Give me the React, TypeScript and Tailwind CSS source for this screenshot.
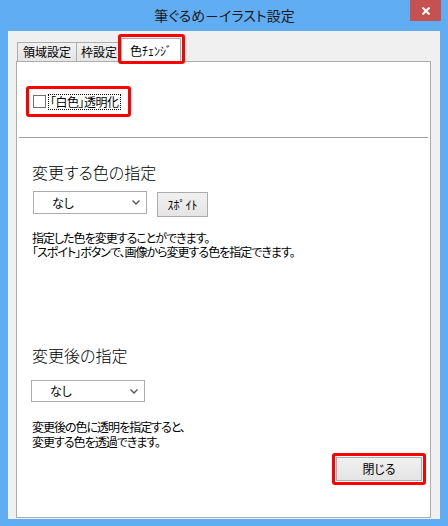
import React from "react";

const font = "font-['Noto_Sans_CJK_JP','Noto_Sans',sans-serif] [font-feature-settings:'palt']";

const Chevron = () => (
  <svg width="8" height="5" viewBox="0 0 8 5" className="ml-auto mr-[6px]">
    <path d="M0.5 0.5 L4 4 L7.5 0.5" fill="none" stroke="#555" strokeWidth="1.4" />
  </svg>
);

const FakeSelect = ({ className }: { className?: string }) => (
  <div
    className={`flex w-[114px] items-center border border-[#acacac] bg-white text-[12px] leading-none ${className ?? ""}`}
  >
    <span className="pl-[18px]">なし</span>
    <Chevron />
  </div>
);

const Tab = ({ label, className }: { label: string; className?: string }) => (
  <div
    className={`flex h-[19px] items-center justify-center border-t border-[#acacac] bg-linear-to-b from-[#f0f0f0] to-[#e5e5e5] text-[12px] leading-none ${className ?? ""}`}
  >
    {label}
  </div>
);

export default function App() {
  return (
    <div className={`flex h-[526px] w-[448px] flex-col bg-[#61adf4] px-[8px] pb-[7px] text-black ${font}`}>
      {/* title bar */}
      <div className="flex h-[31px] shrink-0 items-start">
        <div className="w-[31px]" />
        <div className="flex h-[31px] flex-1 items-center justify-center text-[14px] text-[#1a1a1a]">
          筆ぐるめ－イラスト設定
        </div>
        <div className="-mr-[1px] flex h-[21px] w-[31px] items-center justify-center bg-[#c75050]">
          <svg width="8" height="8" viewBox="0 0 8 8">
            <path d="M0.5 0.5 L7.5 7.5 M7.5 0.5 L0.5 7.5" stroke="#fff" strokeWidth="2" />
          </svg>
        </div>
      </div>

      {/* client area */}
      <div className="flex flex-1 flex-col bg-[#f0f0f0] pb-[1px] pl-[8px] pr-[9px]">
        <div className="flex h-[30px] shrink-0 items-end pl-[1px]">
          <Tab label="領域設定" className="w-[60px] border-x" />
          <Tab label="枠設定" className="w-[45px] border-r" />
          <div className="relative z-10 -mb-[1px] -ml-[1px] flex h-[24px] w-[60px] items-center justify-center border-x border-t border-[#acacac] bg-white text-[12px] leading-none">
            色ﾁｪﾝｼﾞ
            <div className="absolute -bottom-[2px] -left-[4px] -right-[5px] -top-[5px] rounded-[3px] border-[3px] border-[#ff0000]" />
          </div>
        </div>

        <div className="flex flex-1 flex-col border border-[#acacac] bg-white">
          <div className="ml-[9px] mt-[24px] flex h-[31px] w-[105px] items-center rounded-[3px] border-[3px] border-[#ff0000] pl-[4px]">
            <div className="h-[13px] w-[13px] border border-[#707070] bg-white" />
            <span className="ml-[2px] border border-dotted border-black px-[1px] text-[12px] leading-[14px] tracking-[-0.5px]">
              「白色」透明化
            </span>
          </div>

          <div className="mx-[2px] mt-[20px] h-px bg-[#a0a0a0]" />

          <div className="ml-[15px] mt-[24px] text-[16px] font-light leading-[20px]">変更する色の指定</div>

          <div className="ml-[16px] mt-[9px] flex items-start gap-[10px]">
            <FakeSelect className="h-[23px]" />
            <div className="mt-[1px] flex h-[25px] w-[51px] items-center justify-center border border-[#acacac] bg-linear-to-b from-[#f0f0f0] to-[#e5e5e5] text-[12px] leading-none">
              ｽﾎﾟｲﾄ
            </div>
          </div>

          <div className="ml-[15px] mt-[14px] text-[12px] leading-[14px] tracking-[-1px]">
            <div>指定した色を変更することができます。</div>
            <div>「スポイト」ボタンで、画像から変更する色を指定できます。</div>
          </div>

          <div className="ml-[15px] mt-[86px] text-[16px] font-light leading-[20px]">変更後の指定</div>

          <FakeSelect className="ml-[14px] mt-[15px] h-[22px]" />

          <div className="ml-[15px] mt-[17px] text-[12px] leading-[15px] tracking-[-1px]">
            <div>変更後の色に透明を指定すると、</div>
            <div>変更する色を透過できます。</div>
          </div>

          <div className="mr-[4px] mt-[4px] self-end rounded-[3px] border-[3px] border-[#ff0000] p-[1px]">
            <div className="flex h-[24px] w-[86px] items-center justify-center border border-[#acacac] bg-linear-to-b from-[#f0f0f0] to-[#e5e5e5] text-[12px] leading-none">
              閉じる
            </div>
          </div>
        </div>
      </div>
    </div>
  );
}
